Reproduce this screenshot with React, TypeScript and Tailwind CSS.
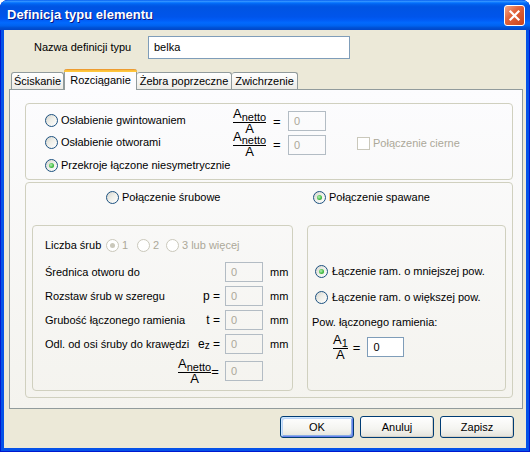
import React from "react";

function Radio({ checked = false, disabled = false }: { checked?: boolean; disabled?: boolean }) {
  return (
    <span
      className={
        disabled
          ? "inline-flex w-[13px] h-[13px] shrink-0 rounded-full border border-[#CAC8BB] bg-white items-center justify-center"
          : "inline-flex w-[13px] h-[13px] shrink-0 rounded-full border border-[#1C5180] bg-[linear-gradient(135deg,#D4D4CE_0%,#EEEEE8_45%,#FFFFFF_100%)] items-center justify-center"
      }
    >
      {checked && (
        <span
          className={
            disabled
              ? "w-[5px] h-[5px] rounded-full bg-[#CAC8BB]"
              : "w-[5px] h-[5px] rounded-full bg-[radial-gradient(circle_at_40%_40%,#B8F0B8_0%,#47BE47_55%,#1E8F1E_100%)]"
          }
        />
      )}
    </span>
  );
}

function Frac({ sub }: { sub: string }) {
  return (
    <span className="inline-flex flex-col items-center">
      <span className="flex items-end border-b border-black">
        <span className="text-[13px] leading-[10px] mb-[3px]">A</span>
        <span className="text-[11px] leading-[10px]">{sub}</span>
      </span>
      <span className="text-[13px] leading-[10px] pt-[1px]">A</span>
    </span>
  );
}

function DisField() {
  return (
    <span className="flex items-center w-[38px] h-[20px] border border-[#B3BCC4] pl-[5px] text-[#ACA899] shrink-0">
      0
    </span>
  );
}

function Button({ label, def = false }: { label: string; def?: boolean }) {
  return (
    <div
      className={
        def
          ? "w-[74px] h-[22px] flex items-center justify-center rounded-[3px] border border-[#003C74] bg-[linear-gradient(to_bottom,#FFFFFF_0%,#F4F4F0_60%,#E3E2DA_100%)] shadow-[inset_1px_1px_0_#CEE7FF,inset_-1px_-1px_0_#6982EE,inset_2px_2px_0_#BCD4F6,inset_-2px_-2px_0_#89ADE4]"
          : "w-[74px] h-[22px] flex items-center justify-center rounded-[3px] border border-[#003C74] bg-[linear-gradient(to_bottom,#FFFFFF_0%,#F4F4F0_60%,#E3E2DA_100%)] shadow-[inset_-1px_-1px_0_#D6D0C5]"
      }
    >
      {label}
    </div>
  );
}

export default function App() {
  return (
    <div className="w-[530px] h-[452px] flex flex-col rounded-t-[8px] overflow-hidden bg-[#0552E8] shadow-[inset_0_0_0_1px_#0019CF] font-['Liberation_Sans',Arial,sans-serif] text-[11px] text-black">
      {/* Title bar */}
      <div className="h-[30px] shrink-0 flex items-center justify-between pl-[7px] pr-[5px] bg-[linear-gradient(to_bottom,#0058EE_0%,#3593FF_4%,#288EFF_6%,#127DFF_8%,#036FFC_10%,#0262EE_14%,#0057E5_20%,#0054E3_24%,#0055EB_56%,#005BF5_66%,#026AFE_76%,#0062EF_86%,#0052D6_92%,#0046C8_100%)]">
        <span className="text-white font-bold text-[13px] [text-shadow:1px_1px_0_#0A1883] pb-[1px]">
          Definicja typu elementu
        </span>
        <div className="w-[21px] h-[21px] rounded-[3px] border border-white bg-[linear-gradient(135deg,#F2A78A_0%,#E2643C_40%,#C8431B_100%)] flex items-center justify-center">
          <svg width="13" height="13" viewBox="0 0 13 13">
            <path d="M2.5 2.5 L10.5 10.5 M10.5 2.5 L2.5 10.5" stroke="white" strokeWidth="2.2" strokeLinecap="square" />
          </svg>
        </div>
      </div>

      {/* Body */}
      <div className="flex-1 mx-[4px] mb-[4px] bg-[#ECE9D8] flex flex-col">
        {/* Name row */}
        <div className="mt-[6px] h-[23px] flex items-center">
          <span className="w-[144px] pl-[30px] whitespace-nowrap">Nazwa definicji typu</span>
          <div className="w-[202px] h-[23px] border border-[#7F9DB9] bg-white flex items-center pl-[5px]">belka</div>
        </div>

        {/* Tabs */}
        <div className="mt-[10px] ml-[5px] w-[514px] flex flex-col">
          <div className="flex items-end h-[20px] pl-[2px] relative z-10">
            <div className="w-[53px] h-[17px] border border-b-0 border-[#919B9C] rounded-t-[3px] bg-[linear-gradient(to_bottom,#FFFFFF,#ECEBE6)] flex items-center justify-center">
              Ściskanie
            </div>
            <div className="w-[73px] h-[21px] -mb-[1px] border-x border-[#919B9C] rounded-t-[3px] bg-[#FCFCFE] flex flex-col">
              <div className="h-[3px] -mx-[1px] rounded-t-[3px] bg-[linear-gradient(to_bottom,#E68B2C_0%,#FFC73C_60%,#FFC73C_100%)]" />
              <div className="flex-1 flex items-center justify-center pb-[2px]">Rozciąganie</div>
            </div>
            <div className="w-[95px] h-[17px] border border-b-0 border-l-0 border-[#919B9C] rounded-t-[3px] bg-[linear-gradient(to_bottom,#FFFFFF,#ECEBE6)] flex items-center justify-center whitespace-nowrap">
              Żebra poprzeczne
            </div>
            <div className="w-[66px] h-[17px] border border-b-0 border-l-0 border-[#919B9C] rounded-t-[3px] bg-[linear-gradient(to_bottom,#FFFFFF,#ECEBE6)] flex items-center justify-center">
              Zwichrzenie
            </div>
          </div>

          {/* Tab panel */}
          <div className="h-[320px] border border-[#919B9C] bg-[linear-gradient(to_bottom,#FCFCFE,#F4F3EE)] pt-[13px] pl-[15px] flex flex-col">
            {/* Group 1 */}
            <div className="w-[488px] h-[77px] border border-[#D0D0BF] rounded-[4px] flex pt-[6px]">
              <div className="w-[207px] pl-[19px] flex flex-col">
                <div className="h-[21px] flex items-center gap-[3px]">
                  <Radio />
                  <span className="whitespace-nowrap">Osłabienie gwintowaniem</span>
                </div>
                <div className="h-[22px] flex items-center gap-[3px]">
                  <Radio />
                  <span className="whitespace-nowrap">Osłabienie otworami</span>
                </div>
                <div className="h-[24px] flex items-center gap-[3px]">
                  <Radio checked />
                  <span className="whitespace-nowrap">Przekroje łączone niesymetrycznie</span>
                </div>
              </div>
              <div className="w-[40px] flex flex-col">
                <div className="h-[23px] flex items-center">
                  <Frac sub="netto" />
                </div>
                <div className="h-[23px] flex items-center">
                  <Frac sub="netto" />
                </div>
              </div>
              <div className="w-[15px] flex flex-col text-[13px]">
                <div className="h-[23px] flex items-center">=</div>
                <div className="h-[23px] flex items-center">=</div>
              </div>
              <div className="flex flex-col">
                <div className="mt-[1px]">
                  <DisField />
                </div>
                <div className="mt-[4px]">
                  <DisField />
                </div>
              </div>
              <div className="ml-[31px] mt-[27px] h-[13px] flex items-center gap-[3px]">
                <span className="w-[13px] h-[13px] border border-[#CAC8BB] bg-white shrink-0" />
                <span className="text-[#ACA899] whitespace-nowrap">Połączenie cierne</span>
              </div>
            </div>

            {/* Group 2 */}
            <div className="mt-[2px] w-[488px] h-[216px] border border-[#D0D0BF] rounded-[4px] flex flex-col">
              <div className="mt-[4px] h-[20px] flex items-center pl-[80px]">
                <div className="w-[207px] flex items-center gap-[3px]">
                  <Radio />
                  <span>Połączenie śrubowe</span>
                </div>
                <div className="flex items-center gap-[3px]">
                  <Radio checked />
                  <span>Połączenie spawane</span>
                </div>
              </div>

              <div className="mt-[18px] flex pl-[6px] gap-[14px]">
                {/* Left sub group */}
                <div className="w-[261px] h-[166px] border border-[#D0D0BF] rounded-[4px] flex flex-col">
                  <div className="mt-[9px] h-[20px] flex items-center pl-[12px]">
                    <span className="w-[61px] whitespace-nowrap">Liczba śrub</span>
                    <div className="w-[31px] flex items-center gap-[3px]">
                      <Radio checked disabled />
                      <span className="text-[#ACA899]">1</span>
                    </div>
                    <div className="w-[29px] flex items-center gap-[3px]">
                      <Radio disabled />
                      <span className="text-[#ACA899]">2</span>
                    </div>
                    <div className="flex items-center gap-[3px]">
                      <Radio disabled />
                      <span className="text-[#ACA899] whitespace-nowrap">3 lub więcej</span>
                    </div>
                  </div>

                  <div className="mt-[7px] h-[20px] flex items-center pl-[12px]">
                    <span className="w-[175px] whitespace-nowrap">Średnica otworu do</span>
                    <span className="ml-[5px]"><DisField /></span>
                    <span className="ml-[7px]">mm</span>
                  </div>
                  <div className="mt-[4px] h-[20px] flex items-center pl-[12px]">
                    <span className="w-[145px] whitespace-nowrap">Rozstaw śrub w szeregu</span>
                    <span className="w-[30px] text-right text-[12px] whitespace-nowrap">p =</span>
                    <span className="ml-[5px]"><DisField /></span>
                    <span className="ml-[7px]">mm</span>
                  </div>
                  <div className="mt-[4px] h-[20px] flex items-center pl-[12px]">
                    <span className="w-[145px] whitespace-nowrap">Grubość łączonego ramienia</span>
                    <span className="w-[30px] text-right text-[12px] whitespace-nowrap">t =</span>
                    <span className="ml-[5px]"><DisField /></span>
                    <span className="ml-[7px]">mm</span>
                  </div>
                  <div className="mt-[4px] h-[20px] flex items-center pl-[12px]">
                    <span className="w-[145px] whitespace-nowrap">Odl. od osi śruby do krawędzi</span>
                    <span className="w-[30px] text-right text-[12px] whitespace-nowrap">
                      e<sub className="text-[10px] relative top-[1px]">z</sub> =
                    </span>
                    <span className="ml-[5px]"><DisField /></span>
                    <span className="ml-[7px]">mm</span>
                  </div>
                  <div className="mt-[4px] h-[26px] flex items-center pl-[12px]">
                    <span className="w-[133px]" />
                    <span className="w-[42px] flex items-center">
                      <Frac sub="netto" />
                      <span className="text-[13px] mt-[2px]">=</span>
                    </span>
                    <span className="ml-[5px]"><DisField /></span>
                  </div>
                </div>

                {/* Right sub group */}
                <div className="w-[199px] h-[166px] border border-[#D0D0BF] rounded-[4px] flex flex-col">
                  <div className="mt-[35px] h-[20px] flex items-center pl-[7px] gap-[4px]">
                    <Radio checked />
                    <span className="whitespace-nowrap">Łączenie ram. o mniejszej pow.</span>
                  </div>
                  <div className="mt-[6px] h-[20px] flex items-center pl-[7px] gap-[4px]">
                    <Radio />
                    <span className="whitespace-nowrap">Łączenie ram. o większej pow.</span>
                  </div>
                  <div className="mt-[5px] h-[20px] flex items-center pl-[4px]">
                    <span className="whitespace-nowrap">Pow. łączonego ramienia:</span>
                  </div>
                  <div className="mt-[2px] h-[26px] flex items-center pl-[25px]">
                    <Frac sub="1" />
                    <span className="ml-[5px] text-[13px] mt-[1px]">=</span>
                    <span className="ml-[7px] w-[37px] h-[20px] border border-[#7F9DB9] bg-white flex items-center pl-[5px]">
                      0
                    </span>
                  </div>
                </div>
              </div>
            </div>
          </div>
        </div>

        {/* Buttons */}
        <div className="mt-[7px] flex justify-end gap-[6px] pr-[12px]">
          <Button label="OK" def />
          <Button label="Anuluj" />
          <Button label="Zapisz" />
        </div>
      </div>
    </div>
  );
}
